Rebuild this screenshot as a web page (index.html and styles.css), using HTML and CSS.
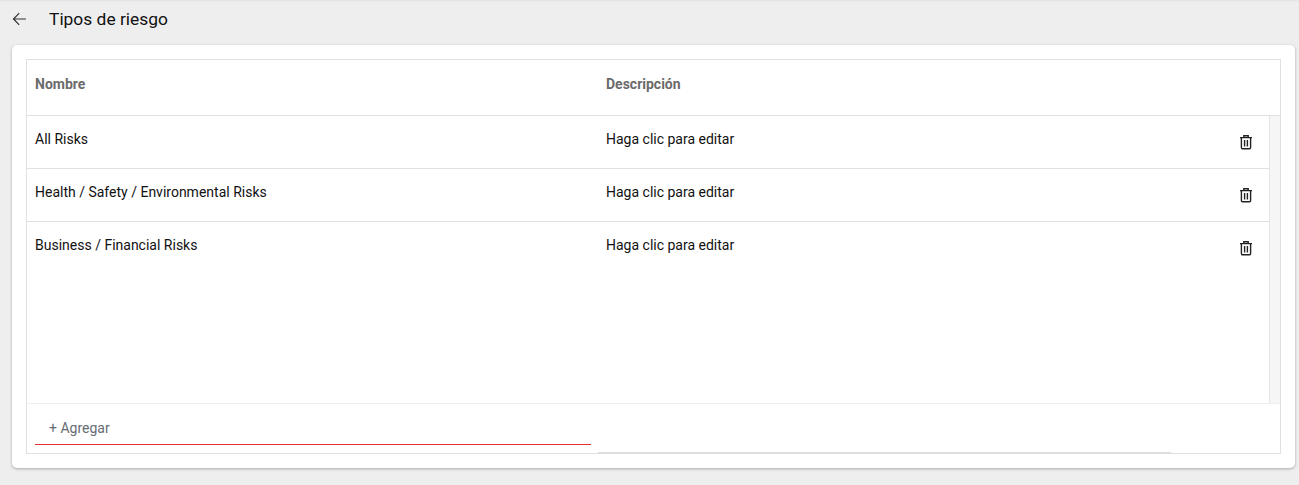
FILE: index.html
```html
<!DOCTYPE html>
<html lang="es">
<head>
<meta charset="utf-8">
<title>Tipos de riesgo</title>
<link rel="stylesheet" href="styles.css">
</head>
<body>
<header class="topbar">
  <svg class="back" width="16" height="16" viewBox="0 0 16 16" fill="none" stroke="#333" stroke-width="1.2"><path d="M14 8H1.5M7.2 2.2 1.5 8l5.7 5.8"/></svg>
  <h1 class="title">Tipos de riesgo</h1>
</header>
<main class="card">
  <div class="table">
    <div class="row head">
      <div class="col-name">Nombre</div>
      <div class="col-desc">Descripción</div>
    </div>
    <div class="body">
      <div class="rows">
        <div class="row item">
          <div class="col-name">All Risks</div>
          <div class="col-desc">Haga clic para editar</div>
          <svg class="trash" width="14" height="16" viewBox="0 0 14 16" fill="none" stroke="#222" stroke-width="1.4"><path d="M1 3.6h12M4.8 3.6V1.7h4.4v1.9M2.4 3.6v10c0 .7.4 1.2 1.1 1.2h7c.7 0 1.1-.5 1.1-1.2v-10M5.6 6v6.4M8.4 6v6.4"/></svg>
        </div>
        <div class="row item">
          <div class="col-name">Health / Safety / Environmental Risks</div>
          <div class="col-desc">Haga clic para editar</div>
          <svg class="trash" width="14" height="16" viewBox="0 0 14 16" fill="none" stroke="#222" stroke-width="1.4"><path d="M1 3.6h12M4.8 3.6V1.7h4.4v1.9M2.4 3.6v10c0 .7.4 1.2 1.1 1.2h7c.7 0 1.1-.5 1.1-1.2v-10M5.6 6v6.4M8.4 6v6.4"/></svg>
        </div>
        <div class="row item">
          <div class="col-name">Business / Financial Risks</div>
          <div class="col-desc">Haga clic para editar</div>
          <svg class="trash" width="14" height="16" viewBox="0 0 14 16" fill="none" stroke="#222" stroke-width="1.4"><path d="M1 3.6h12M4.8 3.6V1.7h4.4v1.9M2.4 3.6v10c0 .7.4 1.2 1.1 1.2h7c.7 0 1.1-.5 1.1-1.2v-10M5.6 6v6.4M8.4 6v6.4"/></svg>
        </div>
      </div>
      <div class="scrollbar"></div>
    </div>
    <div class="footer">
      <div class="add">+ Agregar</div>
    </div>
    <div class="hscroll"></div>
  </div>
</main>
</body>
</html>
```
FILE: styles.css
```css
* { box-sizing: border-box; }
html, body { height: 100%; }
body {
  margin: 0;
  background: #eeeeee;
  font-family: Roboto, "Liberation Sans", sans-serif;
  color: #111;
  overflow: hidden;
}
.topbar {
  height: 45px;
  padding: 11px 0 0 12px;
  display: flex;
  align-items: flex-start;
  box-shadow: inset 0 2px 2px -1px #e2e2e2;
}
.back { flex: none; margin-right: 21px; }
.title {
  margin: 0;
  font-size: 17.4px;
  line-height: 17px;
  font-weight: 400;
  color: #111;
}
.card {
  margin: 0 4px 0 12px;
  height: 423px;
  padding: 14px;
  background: #fff;
  border-radius: 5px;
  box-shadow: 0 1px 3px rgba(0,0,0,.3);
}
.table {
  position: relative;
  height: 395px;
  border: 1px solid #e0e0e0;
  display: flex;
  flex-direction: column;
}
.row { display: flex; }
.col-name { width: 571px; flex: none; }
.col-desc { flex: 1; }
.head {
  height: 56px;
  flex: none;
  padding: 16px 0 0 8px;
  font-size: 14px;
  line-height: 16px;
  font-weight: 700;
  color: #6b6b6b;
  border-bottom: 1px solid #e0e0e0;
}
.body { height: 287px; flex: none; display: flex; }
.rows { flex: 1; }
.item {
  height: 53px;
  padding: 15px 0 0 8px;
  font-size: 14px;
  line-height: 16px;
  color: #111;
  border-bottom: 1px solid #e0e0e0;
}
.item:last-child { border-bottom: 0; }
.trash { flex: none; margin: 3px 16px 0 0; }
.scrollbar {
  width: 11px;
  flex: none;
  background: #f6f6f6;
  border-left: 1px solid #e4e4e4;
}
.footer {
  flex: 1;
  padding: 0 0 0 8px;
  border-top: 1px solid #eeeeee;
}
.add {
  width: 556px;
  height: 41px;
  padding: 16px 0 0 14px;
  font-size: 14px;
  line-height: 16px;
  color: #666c72;
  border-bottom: 1px solid #e53030;
}
.hscroll {
  position: absolute;
  left: 571px;
  bottom: -1px;
  width: 573px;
  height: 2px;
  background: #dedede;
}
```
